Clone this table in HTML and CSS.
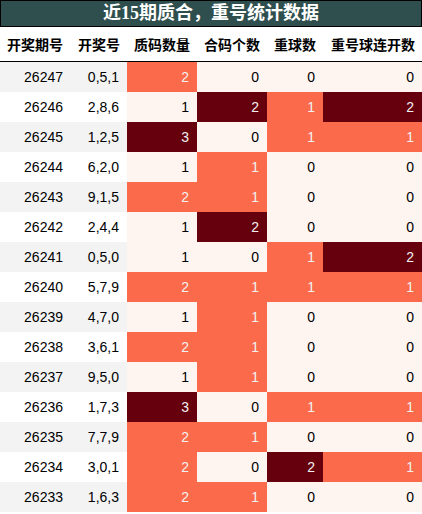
FILE: index.html
```html
<!DOCTYPE html>
<html lang="zh">
<head>
  <meta charset="UTF-8">
  <title>近15期质合，重号统计数据</title>
  <link rel="stylesheet" href="styles.css">
</head>
<body>
  <div class="title">近15期质合，重号统计数据</div>
  <table class="stats">
    <colgroup>
      <col style="width:70px"><col style="width:57px"><col style="width:70px">
      <col style="width:70px"><col style="width:56px"><col style="width:99px">
    </colgroup>
    <thead>
      <tr>
        <th>开奖期号</th><th>开奖号</th><th>质码数量</th><th>合码个数</th><th>重球数</th><th>重号球连开数</th>
      </tr>
    </thead>
    <tbody>
      <tr><td>26247</td><td>0,5,1</td><td class="mid">2</td><td class="low">0</td><td class="low">0</td><td class="low">0</td></tr>
      <tr><td>26246</td><td>2,8,6</td><td class="low">1</td><td class="high">2</td><td class="mid">1</td><td class="high">2</td></tr>
      <tr><td>26245</td><td>1,2,5</td><td class="high">3</td><td class="low">0</td><td class="mid">1</td><td class="mid">1</td></tr>
      <tr><td>26244</td><td>6,2,0</td><td class="low">1</td><td class="mid">1</td><td class="low">0</td><td class="low">0</td></tr>
      <tr><td>26243</td><td>9,1,5</td><td class="mid">2</td><td class="mid">1</td><td class="low">0</td><td class="low">0</td></tr>
      <tr><td>26242</td><td>2,4,4</td><td class="low">1</td><td class="high">2</td><td class="low">0</td><td class="low">0</td></tr>
      <tr><td>26241</td><td>0,5,0</td><td class="low">1</td><td class="low">0</td><td class="mid">1</td><td class="high">2</td></tr>
      <tr><td>26240</td><td>5,7,9</td><td class="mid">2</td><td class="mid">1</td><td class="mid">1</td><td class="mid">1</td></tr>
      <tr><td>26239</td><td>4,7,0</td><td class="low">1</td><td class="mid">1</td><td class="low">0</td><td class="low">0</td></tr>
      <tr><td>26238</td><td>3,6,1</td><td class="mid">2</td><td class="mid">1</td><td class="low">0</td><td class="low">0</td></tr>
      <tr><td>26237</td><td>9,5,0</td><td class="low">1</td><td class="mid">1</td><td class="low">0</td><td class="low">0</td></tr>
      <tr><td>26236</td><td>1,7,3</td><td class="high">3</td><td class="low">0</td><td class="mid">1</td><td class="mid">1</td></tr>
      <tr><td>26235</td><td>7,7,9</td><td class="mid">2</td><td class="mid">1</td><td class="low">0</td><td class="low">0</td></tr>
      <tr><td>26234</td><td>3,0,1</td><td class="mid">2</td><td class="low">0</td><td class="high">2</td><td class="mid">1</td></tr>
      <tr><td>26233</td><td>1,6,3</td><td class="mid">2</td><td class="mid">1</td><td class="low">0</td><td class="low">0</td></tr>
    </tbody>
  </table>
</body>
</html>
```

FILE: styles.css
```css
body {
  margin: 0;
  background-color: #fff;
  font-family: "Liberation Sans", "Noto Sans CJK SC", sans-serif;
}
.title {
  height: 25px;
  line-height: 25px;
  border: 1px solid #000;
  background-color: #2f4f4f;
  color: #fff;
  font-family: "Liberation Serif", "Noto Sans CJK SC", serif;
  font-size: 18px;
  font-weight: bold;
  text-align: center;
}
.stats {
  width: 422px;
  border-collapse: collapse;
  table-layout: fixed;
}
.stats th {
  height: 34px;
  padding: 0 7px 0 0;
  font-size: 14px;
  font-weight: bold;
  color: #000;
  text-align: right;
  border-bottom: 1px solid #000;
  white-space: nowrap;
}
.stats td {
  height: 30px;
  padding: 0 8px 0 0;
  font-size: 14px;
  color: #000;
  text-align: right;
}
.stats tbody tr:nth-child(odd) {
  background-color: #f3f3f3;
}
.stats td:first-child {
  padding-right: 7px;
}
.low { background-color: #fff5f0; color: #000; }
.stats td.mid { background-color: #fb6a4a; color: #f1f1f1; }
.stats td.high { background-color: #67000d; color: #f1f1f1; }
```
